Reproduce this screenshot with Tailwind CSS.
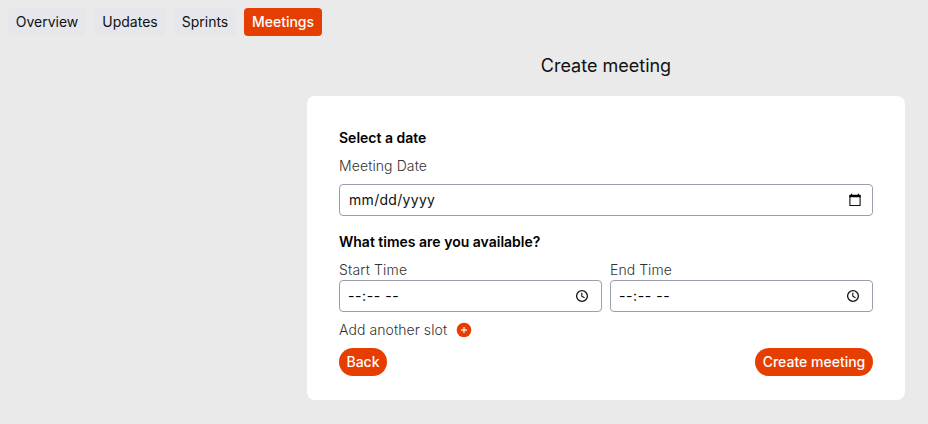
<!DOCTYPE html>
<html lang="en">
<head>
<meta charset="utf-8">
<title>Create meeting</title>
<script src="https://cdn.jsdelivr.net/npm/@tailwindcss/browser@4"></script>
</head>
<body class="h-[424px] overflow-hidden bg-[#eaeaea] font-['Inter',sans-serif] text-sm text-black">
<nav class="flex gap-2 px-2 pt-2">
  <a class="flex h-7 w-[78px] items-center justify-center rounded bg-gray-200 text-[#111]">Overview</a>
  <a class="flex h-7 w-[72px] items-center justify-center rounded bg-gray-200 text-[#111]">Updates</a>
  <a class="flex h-7 w-[62px] items-center justify-center rounded bg-gray-200 text-[#111]">Sprints</a>
  <a class="flex h-7 w-[78px] items-center justify-center rounded bg-[#e63e00] font-medium text-white">Meetings</a>
</nav>
<main class="ml-[307px] w-[598px] pt-4">
  <h1 class="text-center text-lg leading-7 text-[#111]">Create meeting</h1>
  <form class="mt-4 h-[304px] rounded-lg bg-white px-8 pt-8">
    <h2 class="font-semibold leading-5">Select a date</h2>
    <label class="mt-2 block font-light leading-5 tracking-[0.1px] text-[#333]">Meeting Date</label>
    <div class="mt-2 flex h-8 items-center justify-between rounded border border-[#9a9fb0] pr-[10px] pl-[9px]">
      <span class="tracking-[0.3px] text-[#111]">mm/dd/yyyy</span>
      <svg class="h-[14px] w-[14px]" viewBox="0 0 14 14"><path d="M1.900 3h10.200v9.500H1.900z" fill="none" stroke="#111" stroke-width="1.1"/><path d="M1.400 1.700h11.200v2.600H1.400zM3 .7h1.200v2H3zM9.800.7H11v2H9.800z"/></svg>
    </div>
    <h2 class="mt-4 font-semibold leading-5">What times are you available?</h2>
    <div class="mt-2 grid grid-cols-2 gap-2">
      <div>
        <label class="block font-light leading-5 tracking-[0.15px] text-[#333]">Start Time</label>
        <div class="flex h-8 items-center justify-between rounded border border-[#9a9fb0] pr-3 pl-2">
          <span class="tracking-[0.6px]">--:-- --</span>
          <svg class="h-[14px] w-[14px]" viewBox="0 0 14 14" fill="none" stroke="#111" stroke-width="1.3"><circle cx="7" cy="7" r="5.400"/><path d="M6.800 3.800v3.400l2.700 1.600" stroke-width="1.1"/></svg>
        </div>
      </div>
      <div>
        <label class="block font-light leading-5 tracking-[0.05px] text-[#333]">End Time</label>
        <div class="flex h-8 items-center justify-between rounded border border-[#9a9fb0] pr-3 pl-2">
          <span class="tracking-[0.6px]">--:-- --</span>
          <svg class="h-[14px] w-[14px]" viewBox="0 0 14 14" fill="none" stroke="#111" stroke-width="1.3"><circle cx="7" cy="7" r="5.400"/><path d="M6.800 3.800v3.400l2.700 1.600" stroke-width="1.1"/></svg>
        </div>
      </div>
    </div>
    <div class="mt-2 flex h-5 items-center">
      <span class="w-[117px] font-light tracking-[0.08px] text-[#333]">Add another slot</span>
      <svg class="h-4 w-4" viewBox="0 0 16 16"><circle cx="8" cy="8" r="7.300" fill="#e63e00"/><path d="M8 5v6M5 8h6" stroke="#ffe9e0" stroke-width="1.300"/></svg>
    </div>
    <div class="mt-2 flex justify-between font-medium text-white">
      <button type="button" class="h-7 w-12 rounded-full bg-[#e63e00]">Back</button>
      <button type="button" class="h-7 w-[118px] rounded-full bg-[#e63e00]">Create meeting</button>
    </div>
  </form>
</main>
</body>
</html>
